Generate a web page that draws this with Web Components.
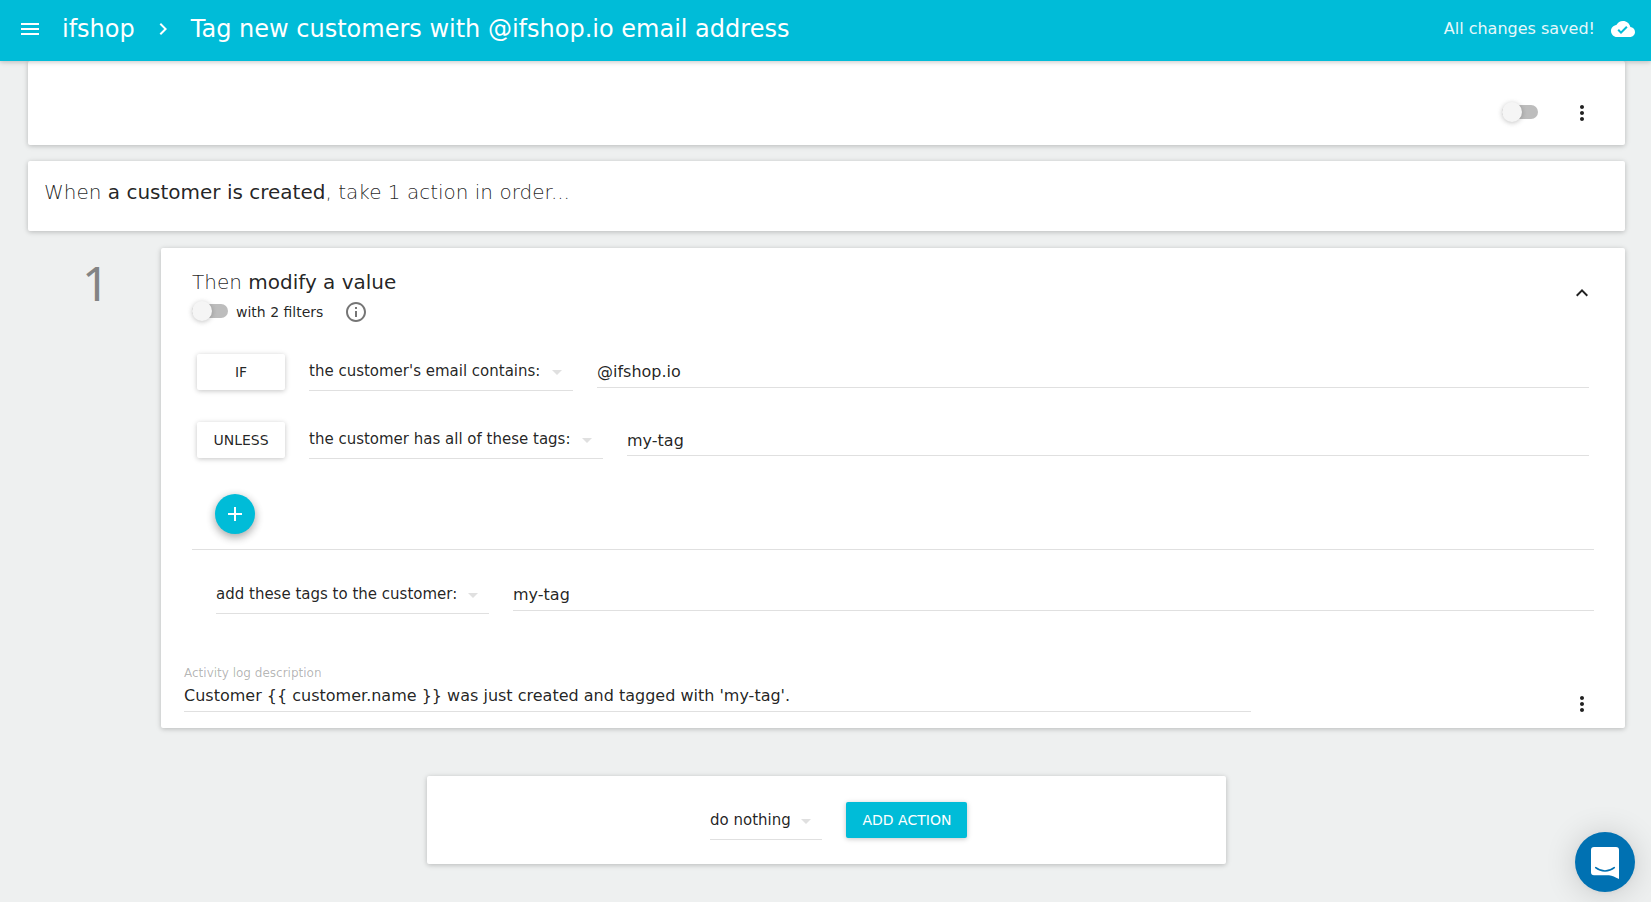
<!DOCTYPE html>
<html lang="en"><head><meta charset="utf-8"><title>Tag new customers</title>
<style>html,body{margin:0;height:100%}body{background:#eef0f0;font-family:"DejaVu Sans",sans-serif;color:rgba(0,0,0,.87);overflow:hidden}</style></head>
<body><rule-page></rule-page>
<script>
const define=(name,html)=>{const t=document.createElement('template');t.innerHTML=html;
customElements.define(name,class extends HTMLElement{constructor(){super();this.attachShadow({mode:'open'}).append(t.content.cloneNode(true));}});};

const ICONS={
menu:'M3 18h18v-2H3v2zm0-5h18v-2H3v2zm0-7v2h18V6H3z',
chevron:'M10 6L8.59 7.41 13.17 12l-4.58 4.59L10 18l6-6z',
cloud:'M19.35 10.04C18.67 6.59 15.64 4 12 4 9.11 4 6.6 5.64 5.35 8.04 2.34 8.36 0 10.91 0 14c0 3.31 2.69 6 6 6h13c2.76 0 5-2.24 5-5 0-2.64-2.05-4.78-4.65-4.96zM10 17l-3.5-3.5 1.41-1.41L10 14.17 15.18 9l1.41 1.41L10 17z',
more:'M12 8c1.1 0 2-.9 2-2s-.9-2-2-2-2 .9-2 2 .9 2 2 2zm0 2c-1.1 0-2 .9-2 2s.9 2 2 2 2-.9 2-2-.9-2-2-2zm0 6c-1.1 0-2 .9-2 2s.9 2 2 2 2-.9 2-2-.9-2-2-2z',
up:'M12 8l-6 6 1.41 1.41L12 10.83l4.59 4.58L18 14z',
info:'M11 17h2v-6h-2v6zm1-15C6.48 2 2 6.48 2 12s4.48 10 10 10 10-4.48 10-10S17.52 2 12 2zm0 18c-4.41 0-8-3.59-8-8s3.59-8 8-8 8 3.59 8 8-3.59 8-8 8zM11 9h2V7h-2v2z',
drop:'M7 10l5 5 5-5z',
add:'M19 13h-6v6h-2v-6H5v-2h6V5h2v6h6v2z'};
customElements.define('md-icon',class extends HTMLElement{constructor(){super();this.attachShadow({mode:'open'});}
connectedCallback(){this.shadowRoot.innerHTML=`<style>:host{display:block;width:24px;height:24px;flex:none}svg{display:block;fill:currentColor}</style><svg width="24" height="24" viewBox="0 0 24 24"><path d="${ICONS[this.getAttribute('name')]}"/></svg>`;}});

define('paper-card',`<style>:host{display:block;box-sizing:border-box;background:#fff;border-radius:2px;box-shadow:0 1px 6px rgba(0,0,0,.12),0 1px 4px rgba(0,0,0,.12)}</style><slot></slot>`);
define('toggle-switch',`<style>:host{display:grid;width:36px;height:20px;align-items:center;flex:none}i,b{grid-area:1/1}i{height:14px;border-radius:30px;background:#bdbdbd}b{width:20px;height:20px;border-radius:50%;background:#f5f5f5;box-shadow:0 1px 6px rgba(0,0,0,.12),0 1px 4px rgba(0,0,0,.12)}</style><i></i><b></b>`);
define('raised-button',`<style>:host{display:block;box-sizing:border-box;height:36px;min-width:88px;padding:0 16px;line-height:36px;font-size:14px;text-align:center;white-space:nowrap;border-radius:2px;background:#fff;box-shadow:0 1px 6px rgba(0,0,0,.12),0 1px 4px rgba(0,0,0,.12)}:host([primary]){background:#00bcd8;color:#fff;padding:0 15.5px 0 16.5px}</style><slot></slot>`);
define('drop-down',`<style>:host{display:flex;box-sizing:border-box;width:var(--w,auto);height:37px;padding-right:4px;border-bottom:1px solid #e0e0e0;font-size:15px;line-height:34px;white-space:nowrap;flex:none}span{flex:1}md-icon{color:#e0e0e0;margin:6px 0 0}</style><span><slot></slot></span><md-icon name="drop"></md-icon>`);
define('text-field',`<style>:host{display:block;box-sizing:border-box;height:34px;border-bottom:1px solid #e0e0e0;font-size:16px;line-height:35px;white-space:nowrap;flex:1}</style><slot></slot>`);
define('action-button',`<style>:host{display:flex;width:40px;height:40px;border-radius:50%;background:#00bcd8;color:#fff;align-items:center;justify-content:center;box-shadow:0 3px 10px rgba(0,0,0,.16),0 3px 10px rgba(0,0,0,.23)}</style><md-icon name="add"></md-icon>`);
define('step-number',`<style>:host{display:block;font:48px/64px "Noto Sans","Open Sans",sans-serif;color:#838484}</style><slot></slot>`);
define('rich-heading',`<style>:host{display:block;font-size:20px;line-height:24px;font-weight:300;white-space:nowrap}::slotted(b){font-weight:400}</style><slot></slot>`);
define('app-bar',`<style>:host{display:flex;box-sizing:border-box;height:61px;padding:0 16px 3px 18px;align-items:center;background:#00bcd8;color:#fff;font-size:24px;white-space:nowrap;box-shadow:0 1px 6px rgba(0,0,0,.12),0 1px 4px rgba(0,0,0,.12);position:relative;z-index:1}
.crumb{margin-left:20px}.sep{margin-left:16px}.title{margin-left:16px;flex:1}.state{font-size:16px;margin:0 16px 2px 0;opacity:.9}</style>
<md-icon name="menu"></md-icon><span class="crumb"><slot name="shop"></slot></span><md-icon class="sep" name="chevron"></md-icon><span class="title"><slot></slot></span><span class="state"><slot name="state"></slot></span><md-icon name="cloud"></md-icon>`);
define('chat-launcher',`<style>:host{position:fixed;right:16px;bottom:10px;width:60px;height:60px;border-radius:50%;background:#0071b2;box-shadow:0 1px 6px rgba(0,0,0,.06),0 2px 32px rgba(0,0,0,.16)}svg{display:block}</style>
<svg width="60" height="60" viewBox="0 0 60 60"><path fill="#fff" d="M19 15h22a3 3 0 0 1 3 3V47c-4-1.500-6.500-3.500-10-3.700H19a3 3 0 0 1-3-3V18a3 3 0 0 1 3-3z"/><path fill="none" stroke="#0071b2" stroke-width="1.600" stroke-linecap="round" d="M20.700 35.700c5.400 4.300 13.200 4.300 18.600 0"/></svg>`);

define('filter-row',`<style>:host{display:flex;height:37px;gap:24px;align-items:flex-start}</style><slot></slot>`);
define('rule-page',`<style>
:host{display:block}
main{padding:0 26px 0 28px}
.top{height:84px;display:flex;justify-content:flex-end;align-items:flex-start;padding:41px 31px 0 0}
.top toggle-switch{margin-right:32px}.top md-icon{margin-top:-1px}
.when{height:70px;margin-top:16px;padding:19px 16px 0}
.step{display:grid;grid-template-columns:133px 1fr;margin-top:17px}
step-number{padding:3px 0 0 54px}
.card{height:480px;padding:22px 31px 0 31px;display:flex;flex-direction:column}
.head{display:flex;justify-content:space-between}
.head>md-icon{margin:11px 0 0}
.sub{display:flex;height:24px;margin-top:6px;align-items:center;font-size:14px}
.sub toggle-switch{margin:-2px 8px 0 0}.sub span{flex:none}.sub md-icon{margin-left:21px;color:rgba(0,0,0,.54)}
.filters{padding:30px 5px 0;display:grid;gap:31px}
.filters raised-button{width:88px;padding:0}
.tags text-field{line-height:37px}
action-button{margin:35px 0 0 23px}
hr{width:100%;margin:15px 0 0;border:0;border-top:1px solid #e0e0e0}
.action{margin:27px 0 0 24px}
.log{display:flex;justify-content:space-between;margin:51px 0 0 -8px;align-items:flex-end}
.log>div{width:1067px}.label{font-size:12px;line-height:16px;color:rgba(0,0,0,.3)}
.log text-field{height:31px;line-height:29px;}
.log>md-icon{margin-bottom:-4px}
.add{width:799px;height:88px;margin:48px auto 0;padding:26px 0 0 283px;display:flex;gap:24px;align-items:flex-start}
.add drop-down{margin-top:1px}
</style>
<app-bar><span slot="shop">ifshop</span>Tag new customers with @ifshop.io email address<span slot="state">All changes saved!</span></app-bar>
<main>
<paper-card class="top"><toggle-switch></toggle-switch><md-icon name="more"></md-icon></paper-card>
<paper-card class="when"><rich-heading>When <b>a customer is created</b>, take 1 action in order...</rich-heading></paper-card>
<section class="step"><step-number>1</step-number>
<paper-card class="card">
<div class="head"><div><rich-heading>Then <b>modify a value</b></rich-heading><div class="sub"><toggle-switch></toggle-switch><span>with 2 filters</span><md-icon name="info"></md-icon></div></div><md-icon name="up"></md-icon></div>
<div class="filters">
<filter-row><raised-button>IF</raised-button><drop-down style="--w:264px">the customer's email contains:</drop-down><text-field>@ifshop.io</text-field></filter-row>
<filter-row class="tags"><raised-button>UNLESS</raised-button><drop-down style="--w:294px">the customer has all of these tags:</drop-down><text-field>my-tag</text-field></filter-row>
</div>
<action-button></action-button><hr>
<filter-row class="action"><drop-down style="--w:273px">add these tags to the customer:</drop-down><text-field>my-tag</text-field></filter-row>
<div class="log"><div><div class="label">Activity log description</div><text-field>Customer {{ customer.name }} was just created and tagged with 'my-tag'.</text-field></div><md-icon name="more"></md-icon></div>
</paper-card></section>
<paper-card class="add"><drop-down style="--w:112px">do nothing</drop-down><raised-button primary>ADD ACTION</raised-button></paper-card>
</main>
<chat-launcher></chat-launcher>`);
</script></body></html>
